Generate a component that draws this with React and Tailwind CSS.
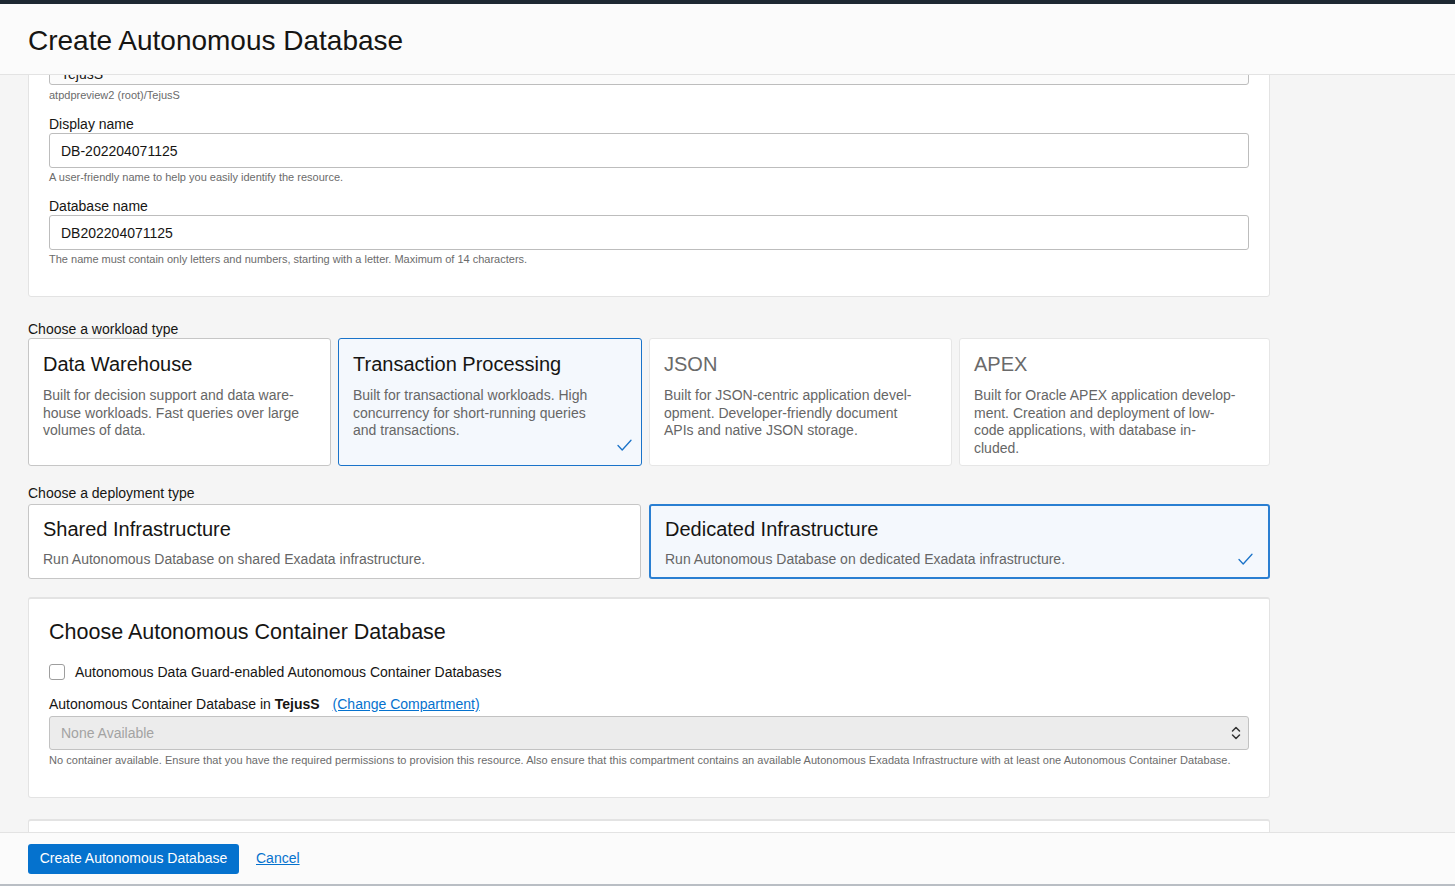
import React, { useState } from 'react';

const font = { fontFamily: '"Liberation Sans", Arial, sans-serif' };

const Check = ({ className }) => (
    <svg className={className} width="15" height="13" viewBox="0 0 15 13" fill="none">
        <path d="M1 6.5 L5.2 11 L14 1.2" stroke="#1a73c9" strokeWidth="1.3" strokeLinecap="round" strokeLinejoin="round" />
    </svg>
);

const workloads = [
    {
        id: 'dw',
        title: 'Data Warehouse',
        lines: ['Built for decision support and data ware-', 'house workloads. Fast queries over large', 'volumes of data.'],
        muted: false,
    },
    {
        id: 'tp',
        title: 'Transaction Processing',
        lines: ['Built for transactional workloads. High', 'concurrency for short-running queries', 'and transactions.'],
        muted: false,
    },
    {
        id: 'json',
        title: 'JSON',
        lines: ['Built for JSON-centric application devel-', 'opment. Developer-friendly document', 'APIs and native JSON storage.'],
        muted: true,
    },
    {
        id: 'apex',
        title: 'APEX',
        lines: ['Built for Oracle APEX application develop-', 'ment. Creation and deployment of low-', 'code applications, with database in-', 'cluded.'],
        muted: true,
    },
];

const deployments = [
    { id: 'shared', title: 'Shared Infrastructure', desc: 'Run Autonomous Database on shared Exadata infrastructure.' },
    { id: 'dedicated', title: 'Dedicated Infrastructure', desc: 'Run Autonomous Database on dedicated Exadata infrastructure.' },
];

const Field = ({ label, value, help }) => (
    <div>
        <label className="block mt-[14px] text-[14px] leading-[17px] text-[#161513]">{label}</label>
        <div className="h-[35px] border border-[#bdbdbd] rounded-[3px] bg-white pl-[11px] pt-[1px] flex items-center text-[14px] text-[#161513]">
            {value}
        </div>
        <p className="mt-[2px] text-[11px] leading-[14px] text-[#6b6b6b]">{help}</p>
    </div>
);

export default function App() {
    const [workload, setWorkload] = useState('tp');
    const [deployment, setDeployment] = useState('dedicated');
    const [dataGuard, setDataGuard] = useState(false);

    return (
        <div style={font} className="h-[886px] w-full flex flex-col bg-[#f5f5f5] overflow-hidden">
            <div className="h-[4px] bg-[#1e2832] shrink-0" />
            <header className="relative z-10 h-[71px] shrink-0 bg-[#fbfbfb] border-b border-[#e3e3e3] px-[28px] flex items-center">
                <h1 className="mt-[3px] text-[28px] text-[#161513] leading-none">Create Autonomous Database</h1>
            </header>

            <main className="flex-1 overflow-hidden">
                <div className="-mt-[45px] ml-[28px] w-[1242px]">
                    {/* Basic info, scrolled partly under the header */}
                    <div className="bg-white border border-[#e3e3e3] rounded-[3px] px-[20px] pt-[19px] pb-[30px]">
                        <div className="h-[35px] border border-[#bdbdbd] rounded-[3px] bg-[#fbfbfb] pl-[11px] pt-[14px] flex items-center text-[14px] text-[#161513]">
                            TejusS
                        </div>
                        <p className="mt-[3px] text-[11px] leading-[14px] text-[#6b6b6b]">atpdpreview2 (root)/TejusS</p>
                        <Field label="Display name" value="DB-202204071125" help="A user-friendly name to help you easily identify the resource." />
                        <Field label="Database name" value="DB202204071125" help="The name must contain only letters and numbers, starting with a letter. Maximum of 14 characters." />
                    </div>

                    {/* Workload */}
                    <p className="mt-[24px] text-[14px] leading-[17px] text-[#161513]">Choose a workload type</p>
                    <div className="grid grid-cols-[303px_304px_303px_1fr] gap-[7px]">
                        {workloads.map(w => {
                            const sel = workload === w.id;
                            return (
                                <div key={w.id} onClick={() => setWorkload(w.id)}
                                    className={`relative h-[128px] rounded-[3px] border px-[14px] pt-[13px] cursor-pointer ${sel ? 'bg-[#f4f8fd] border-[#1a73c9]' : w.muted ? 'bg-white border-[#e6e6e6]' : 'bg-white border-[#c6c6c6]'}`}>
                                    <h3 className={`text-[20px] leading-[24px] ${w.muted ? 'text-[#6a6a6a]' : 'text-[#161513]'}`}>{w.title}</h3>
                                    <p className="mt-[11px] text-[14px] leading-[17.5px] text-[#666666]">
                                        {w.lines.map((l, i) => <span key={i} className="block whitespace-nowrap">{l}</span>)}
                                    </p>
                                    {sel && <Check className="absolute right-[9px] bottom-[13px]" />}
                                </div>
                            );
                        })}
                    </div>

                    {/* Deployment */}
                    <p className="mt-[19px] text-[14px] leading-[17px] text-[#161513]">Choose a deployment type</p>
                    <div className="mt-[2px] grid grid-cols-[613px_1fr] gap-[8px]">
                        {deployments.map(d => {
                            const sel = deployment === d.id;
                            return (
                                <div key={d.id} onClick={() => setDeployment(d.id)}
                                    className={`relative h-[75px] rounded-[3px] px-[14px] cursor-pointer ${sel ? 'bg-[#f4f8fd] border-2 border-[#2a7fd2] pt-[11px]' : 'bg-white border border-[#c6c6c6] pt-[12px]'}`}>
                                    <h3 className="text-[20px] leading-[24px] text-[#161513]">{d.title}</h3>
                                    <p className="mt-[10px] text-[14px] leading-[17.5px] text-[#666666]">{d.desc}</p>
                                    {sel && <Check className="absolute right-[15px] bottom-[11px]" />}
                                </div>
                            );
                        })}
                    </div>

                    {/* Container database */}
                    <div className="mt-[18px] bg-white border border-[#e3e3e3] border-t-2 rounded-[3px] px-[20px] pt-[20px] pb-[30px]">
                        <h2 className="text-[21.5px] leading-[26px] text-[#161513]">Choose Autonomous Container Database</h2>
                        <label className="mt-[18px] h-[18px] flex items-center gap-[10px] cursor-pointer">
                            <input type="checkbox" checked={dataGuard} onChange={e => setDataGuard(e.target.checked)}
                                className="appearance-none w-[16px] h-[16px] rounded-[3px] border border-[#9e9e9e] bg-white" />
                            <span className="text-[14px] text-[#161513]">Autonomous Data Guard-enabled Autonomous Container Databases</span>
                        </label>
                        <div className="mt-[15px] text-[14px] leading-[17px] text-[#161513] flex items-center">
                            <span>Autonomous Container Database in <b>TejusS</b></span>
                            <a href="#" className="ml-[13px] text-[#0572ce] underline">(Change Compartment)</a>
                        </div>
                        <div className="mt-[3px] h-[34px] rounded-[3px] border border-[#c2c2c2] bg-[#ececec] pl-[11px] pr-[7px] flex items-center justify-between">
                            <span className="text-[14px] text-[#a3a3a3]">None Available</span>
                            <svg width="10" height="16" viewBox="0 0 10 16" fill="none">
                                <path d="M1.5 6 L5 2.5 L8.5 6" stroke="#333" strokeWidth="1.5" strokeLinecap="round" strokeLinejoin="round" />
                                <path d="M1.5 10 L5 13.5 L8.5 10" stroke="#333" strokeWidth="1.5" strokeLinecap="round" strokeLinejoin="round" />
                            </svg>
                        </div>
                        <p className="mt-[3px] text-[11px] leading-[14px] text-[#6b6b6b] whitespace-nowrap tracking-[0.04px]">
                            No container available. Ensure that you have the required permissions to provision this resource. Also ensure that this compartment contains an available Autonomous Exadata Infrastructure with at least one Autonomous Container Database.
                        </p>
                    </div>

                    <div className="mt-[21px] h-[80px] bg-white border border-[#e3e3e3] border-t-2 rounded-[3px]" />
                </div>
            </main>

            <footer className="h-[54px] shrink-0 bg-[#fbfbfb] border-t border-[#e3e3e3] border-b-2 border-b-[#b9bec4] px-[28px] flex items-center gap-[17px]">
                <button className="h-[30px] w-[211px] rounded-[3px] bg-[#0572ce] text-white text-[14px]">Create Autonomous Database</button>
                <a href="#" className="text-[14px] text-[#0572ce] underline">Cancel</a>
            </footer>
        </div>
    );
}
